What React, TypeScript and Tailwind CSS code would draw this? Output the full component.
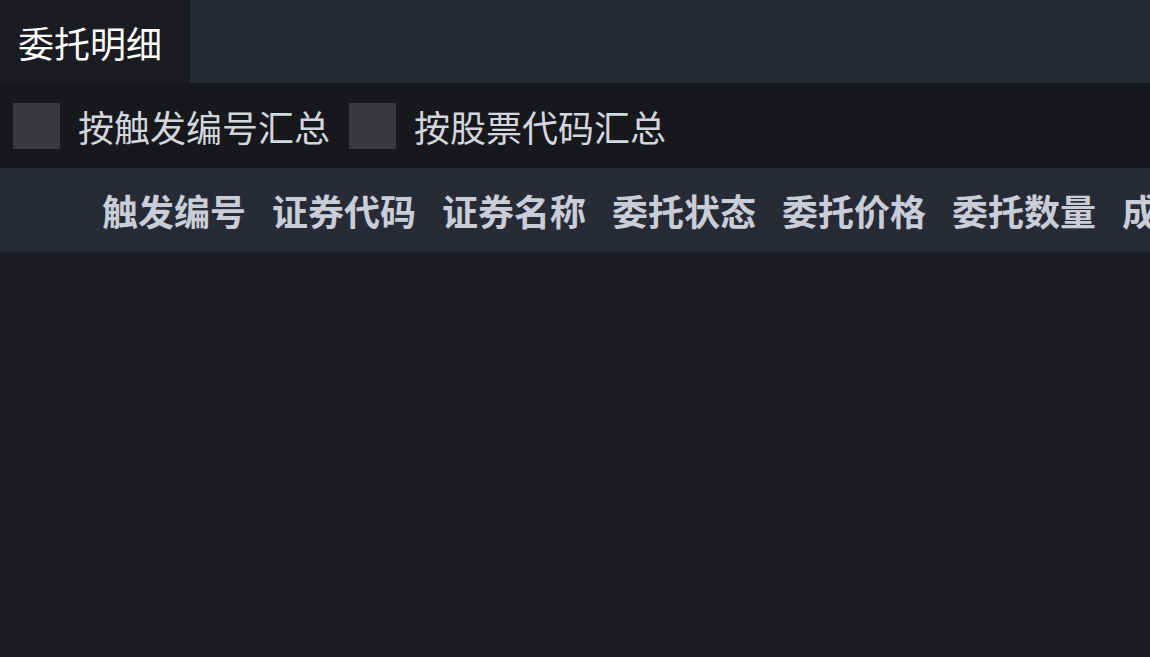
const font = { fontFamily: '"Noto Sans CJK SC", "Noto Sans", sans-serif' };

const columns = ["触发编号", "证券代码", "证券名称", "委托状态", "委托价格", "委托数量", "成交数量"];

function Checkbox({ label }: { label: string }) {
  return (
    <label className="flex items-center">
      <span className="w-[47px] h-[46px] bg-[#393a40] shrink-0" />
      <span className="ml-[18px] text-[36px] leading-none text-[#d3d6de] whitespace-nowrap">{label}</span>
    </label>
  );
}

export default function App() {
  return (
    <div className="w-[1150px] h-[657px] bg-[#1c1d22] overflow-hidden flex flex-col" style={font}>
      <div className="h-[83px] bg-[#252932] flex shrink-0">
        <div className="w-[190px] h-full bg-[#1b1c21] flex items-center pl-[18px] text-[36px] text-white whitespace-nowrap">
          委托明细
        </div>
      </div>
      <div className="h-[85px] bg-[#17181c] flex items-center pl-[13px] gap-[19px] shrink-0">
        <Checkbox label="按触发编号汇总" />
        <Checkbox label="按股票代码汇总" />
      </div>
      <div className="h-[84px] bg-[#272b36] flex items-center pl-[102px] gap-[26px] shrink-0 overflow-hidden">
        {columns.map((c) => (
          <span key={c} className="text-[36px] font-bold leading-none text-[#c9cdd8] whitespace-nowrap">
            {c}
          </span>
        ))}
      </div>
      <div className="flex-1 bg-[#1c1d22]" />
    </div>
  );
}
